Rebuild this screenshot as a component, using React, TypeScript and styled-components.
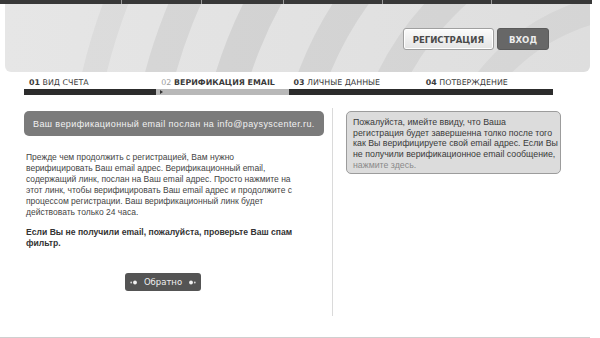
import React from "react";
import styled, { createGlobalStyle } from "styled-components";

const GlobalStyle = createGlobalStyle`
	html, body {
		margin: 0;
		padding: 0;
		background: #ffffff;
	}
	body {
		font-family: "Liberation Sans", Arial, sans-serif;
		color: #3a3a3a;
	}
`;

const NAV_CELLS = [121, 80, 82, 99, 109, 101];

const STEPS = [
	{ num: "01", title: "ВИД СЧЕТА", state: "done" },
	{ num: "02", title: "ВЕРИФИКАЦИЯ EMAIL", state: "active" },
	{ num: "03", title: "ЛИЧНЫЕ ДАННЫЕ", state: "todo" },
	{ num: "04", title: "ПОТВЕРЖДЕНИЕ", state: "todo" },
];

// decorative arcs of the header: radius, band width, opacity
const ARCS = [
	{ r: 566, w: 24, o: 0.035 },
	{ r: 502, w: 30, o: 0.06 },
	{ r: 432, w: 34, o: 0.065 },
	{ r: 356, w: 30, o: 0.06 },
	{ r: 283, w: 30, o: 0.05 },
	{ r: 200, w: 26, o: 0.04 },
];

function HeaderArcs() {
	return (
		<ArcsSvg viewBox="0 0 585 68" preserveAspectRatio="none">
			{ARCS.map((a) => (
				<circle key={a.r} cx="640" cy="200" r={a.r} fill="none" stroke="#000" strokeOpacity={a.o} strokeWidth={a.w} />
			))}
		</ArcsSvg>
	);
}

function Dots({ flip }: { flip?: boolean }) {
	return (
		<svg width="8" height="5" viewBox="0 0 8 5" style={{ transform: flip ? "scaleX(-1)" : undefined }}>
			<circle cx="1.2" cy="2.5" r="0.9" fill="#d8d8d8" />
			<circle cx="5" cy="2.5" r="1.9" fill="#f2f2f2" />
		</svg>
	);
}

export default function App() {
	return (
		<>
			<GlobalStyle />
			<Page>
				<TopNav>
					{NAV_CELLS.map((w, i) => (
						<NavCell key={i} first={i === 0} style={{ width: w }} />
					))}
				</TopNav>
				<Header>
					<HeaderArcs />
					<HeaderButton>РЕГИСТРАЦИЯ</HeaderButton>
					<HeaderButton dark>ВХОД</HeaderButton>
				</Header>
				<Steps>
					{STEPS.map((s) => (
						<Step key={s.num}>
							<StepLabel active={s.state === "active"}>
								<StepNum active={s.state === "active"}>{s.num}</StepNum> {s.title}
							</StepLabel>
							<StepBar active={s.state === "active"} />
						</Step>
					))}
				</Steps>
				<Content>
					<LeftCol>
						<Notice>Ваш верификационный email послан на info@paysyscenter.ru.</Notice>
						<Paragraph>
							Прежде чем продолжить с регистрацией, Вам нужно
							<br />
							верифицировать Ваш email адрес. Верификационный email,
							<br />
							содержащий линк, послан на Ваш email адрес. Просто нажмите на
							<br />
							этот линк, чтобы верифицировать Ваш email адрес и продолжите с
							<br />
							процессом регистрации. Ваш верификационный линк будет
							<br />
							действовать только 24 часа.
						</Paragraph>
						<Paragraph bold>
							Если Вы не получили email, пожалуйста, проверьте Ваш спам
							<br />
							фильтр.
						</Paragraph>
						<BackButton>
							<Dots />
							<span>Обратно</span>
							<Dots flip />
						</BackButton>
					</LeftCol>
					<RightCol>
						<InfoBox>
							Пожалуйста, имейте ввиду, что Ваша
							<br />
							регистрация будет завершенна толко после того
							<br />
							как Вы верифицируете свой email адрес. Если Вы
							<br />
							не получили верификационное email сообщение,
							<br />
							<InfoLink>нажмите здесь.</InfoLink>
						</InfoBox>
					</RightCol>
				</Content>
				<FooterLine />
			</Page>
		</>
	);
}

const Page = styled.div`
	width: 600px;
	height: 338px;
	overflow: hidden;
	display: flex;
	flex-direction: column;
`;

const TopNav = styled.div`
	display: flex;
	height: 4px;
`;

const NavCell = styled.div<{ first?: boolean }>`
	height: 4px;
	background: #383838;
	border-left: ${(p) => (p.first ? "none" : "1px solid #9a9a9a")};
	box-sizing: border-box;
`;

const Header = styled.div`
	position: relative;
	overflow: hidden;
	height: 68px;
	margin: 0 10px 0 5px;
	border-radius: 0 0 6px 6px;
	box-sizing: border-box;
	padding: 24px 41px 0 0;
	display: flex;
	justify-content: flex-end;
	align-items: flex-start;
	gap: 3px;
	background: linear-gradient(90deg, #e6e6e6 0%, #e2e2e2 50%, #dedede 100%);
`;

const ArcsSvg = styled.svg`
	position: absolute;
	left: 0;
	top: 0;
	width: 100%;
	height: 100%;
`;

const HeaderButton = styled.div<{ dark?: boolean }>`
	position: relative;
	height: 22px;
	box-sizing: border-box;
	padding: 0 ${(p) => (p.dark ? "11px" : "9px")};
	min-width: ${(p) => (p.dark ? "49px" : "74px")};
	display: flex;
	align-items: center;
	justify-content: center;
	border-radius: 3px;
	font-family: "Liberation Sans Narrow", "DejaVu Sans Condensed", "Liberation Sans", sans-serif;
	font-weight: bold;
	font-size: 9.5px;
	color: ${(p) => (p.dark ? "#ececec" : "#4a4a4a")};
	background: ${(p) => (p.dark ? "#676767" : "linear-gradient(#fbfbfb, #e4e4e4)")};
	border: 1px solid ${(p) => (p.dark ? "#5a5a5a" : "#a0a0a0")};
	box-shadow: ${(p) => (p.dark ? "none" : "inset 0 0 0 1px #ffffff")};
`;

const Steps = styled.div`
	display: grid;
	grid-template-columns: repeat(4, 132.25px);
	margin: 5px 0 0 24px;
`;

const Step = styled.div`
	display: flex;
	flex-direction: column;
`;

const StepLabel = styled.div<{ active?: boolean }>`
	padding-left: 5px;
	height: 11px;
	line-height: 11px;
	font-family: "DejaVu Sans", sans-serif;
	font-size: 7.9px;
	font-weight: ${(p) => (p.active ? "bold" : "normal")};
	color: #3a3a3a;
	white-space: nowrap;
`;

const StepNum = styled.span<{ active?: boolean }>`
	font-weight: ${(p) => (p.active ? "normal" : "bold")};
	color: ${(p) => (p.active ? "#9a9a9a" : "#3a3a3a")};
`;

const StepBar = styled.div<{ active?: boolean }>`
	position: relative;
	margin-top: 1px;
	height: 6px;
	background: ${(p) => (p.active ? "#b8b8b8" : "#2c2c2c")};
	&::before {
		content: "";
		display: ${(p) => (p.active ? "block" : "none")};
		position: absolute;
		left: 4px;
		top: 1px;
		border-left: 3px solid #333;
		border-top: 2px solid transparent;
		border-bottom: 2px solid transparent;
	}
`;

const Content = styled.div`
	display: flex;
	margin-top: 13px;
	height: 208px;
`;

const LeftCol = styled.div`
	width: 300px;
	margin: 0 8px 0 24px;
	padding-top: 3px;
	display: flex;
	flex-direction: column;
	align-items: flex-start;
`;

const Notice = styled.div`
	width: 300px;
	height: 25px;
	box-sizing: border-box;
	padding-left: 9px;
	display: flex;
	align-items: center;
	border-radius: 5px;
	background: #7b7b7b;
	color: #f2f2f2;
	font-size: 9px;
	letter-spacing: 0.4px;
	white-space: nowrap;
`;

const Paragraph = styled.p<{ bold?: boolean }>`
	margin: ${(p) => (p.bold ? "9px" : "16px")} 0 0 2px;
	font-size: ${(p) => (p.bold ? "8.6px" : "8.5px")};
	line-height: 11px;
	font-weight: ${(p) => (p.bold ? "bold" : "normal")};
	color: ${(p) => (p.bold ? "#333" : "#444")};
	white-space: nowrap;
`;

const BackButton = styled.div`
	margin: 24px 0 0 101px;
	width: 76px;
	height: 18px;
	box-sizing: border-box;
	padding: 0 5px;
	display: flex;
	align-items: center;
	justify-content: space-between;
	border-radius: 3px;
	background: #545454;
	color: #efefef;
	font-family: "DejaVu Sans", sans-serif;
	font-size: 8.5px;
`;

const RightCol = styled.div`
	border-left: 1px solid #dadada;
	padding: 3px 0 0 13px;
`;

const InfoBox = styled.div`
	width: 215px;
	box-sizing: border-box;
	padding: 5px 2px 2px 6px;
	background: #dcdcdc;
	border: 1px solid #9c9c9c;
	border-radius: 5px;
	font-size: 8.8px;
	line-height: 10.7px;
	color: #3a3a3a;
	white-space: nowrap;
`;

const InfoLink = styled.span`
	color: #8a8a8a;
`;

const FooterLine = styled.div`
	margin-top: 21px;
	width: 590px;
	height: 1px;
	background: #cfcfcf;
`;
